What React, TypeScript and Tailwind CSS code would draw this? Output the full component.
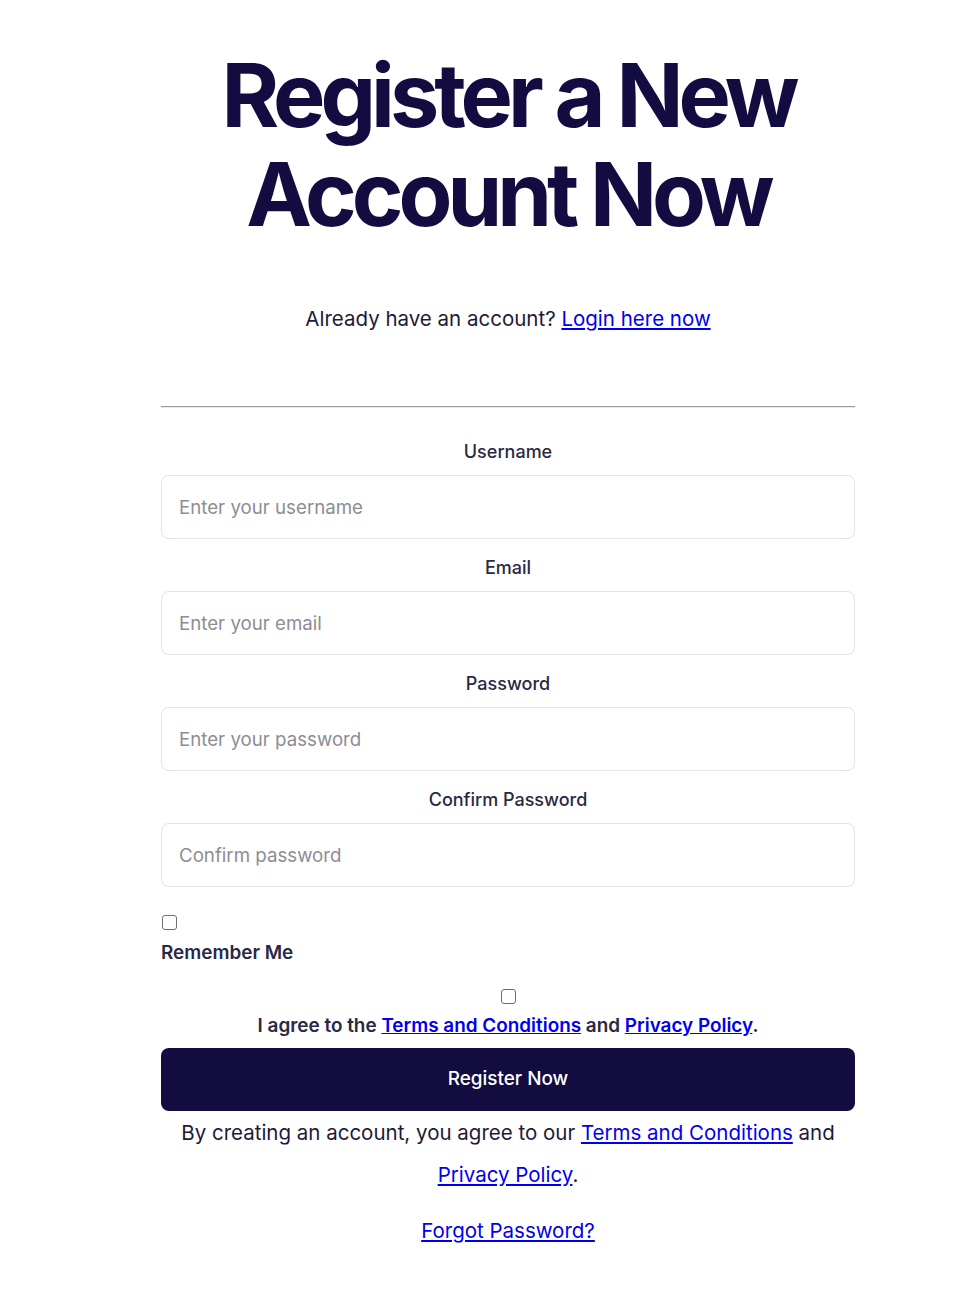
import React from "react";

const navy = "text-[#130c40]";

function Field({ label, placeholder, type = "text" }: { label: string; placeholder: string; type?: string }) {
  return (
    <div className="flex flex-col">
      <label className="text-center text-[18px] font-medium leading-[24px] text-[#2a2844] mb-[11px] block">{label}</label>
      <input
        type={type}
        placeholder={placeholder}
        className="h-[64px] w-full rounded-[8px] border border-[#e3e3e6] px-[17px] text-[18.7px] text-[#130c40] placeholder:text-[#8d8d93] outline-none"
      />
    </div>
  );
}

export default function App() {
  return (
    <div className="min-h-[1306px] bg-white" style={{ fontFamily: "Inter, 'Noto Sans', sans-serif" }}>
      <div className="ml-[161px] w-[694px] flex flex-col">
        <h1 className={`mt-[46px] text-center text-[88px] font-bold leading-[99px] tracking-[-0.057em] ${navy}`}>
          Register a New
          <br />
          Account Now
        </h1>
        <p className="mt-[61px] text-center text-[20.5px] leading-[28px] text-[#1d1a3a]">
          Already have an account?{" "}
          <a href="#" className="text-[#0000ee] underline">Login here now</a>
        </p>
        <hr className="mt-[73px] h-0 border-0 border-t border-t-[#9b9b9b] border-b border-b-[#ececec]" />
        <form className="mt-[32px] flex flex-col gap-[17px]" onSubmit={(e) => e.preventDefault()}>
          <Field label="Username" placeholder="Enter your username" />
          <Field label="Email" placeholder="Enter your email" type="email" />
          <Field label="Password" placeholder="Enter your password" type="password" />
          <Field label="Confirm Password" placeholder="Confirm password" type="password" />
        </form>
        <div className="mt-[28px] flex flex-col items-start">
          <input type="checkbox" className="ml-[1px] h-[15px] w-[15px] appearance-none rounded-[3px] border border-[#6f6f6f] bg-white" />
          <span className="mt-[11px] text-[18.9px] font-semibold leading-[24px] text-[#2a2844]">Remember Me</span>
        </div>
        <div className="mt-[24px] flex flex-col items-center">
          <input type="checkbox" className="h-[15px] w-[15px] appearance-none rounded-[3px] border border-[#6f6f6f] bg-white" />
          <p className="mt-[10px] text-[18.9px] font-semibold leading-[24px] text-[#2a2844]">
            I agree to the <a href="#" className="text-[#0000ee] underline">Terms and Conditions</a> and{" "}
            <a href="#" className="text-[#0000ee] underline">Privacy Policy</a>.
          </p>
        </div>
        <button className="mt-[10px] h-[63px] w-full rounded-[8px] bg-[#130c40] text-[18.9px] font-medium text-white">
          Register Now
        </button>
        <p className="mt-[1px] text-center text-[20.5px] leading-[42px] text-[#1d1a3a]">
          By creating an account, you agree to our{" "}
          <a href="#" className="text-[#0000ee] underline">Terms and Conditions</a> and{" "}
          <a href="#" className="text-[#0000ee] underline">Privacy Policy</a>.
        </p>
        <p className="mt-[21px] text-center text-[20.5px] leading-[28px]">
          <a href="#" className="text-[#0000ee] underline">Forgot Password?</a>
        </p>
      </div>
    </div>
  );
}
